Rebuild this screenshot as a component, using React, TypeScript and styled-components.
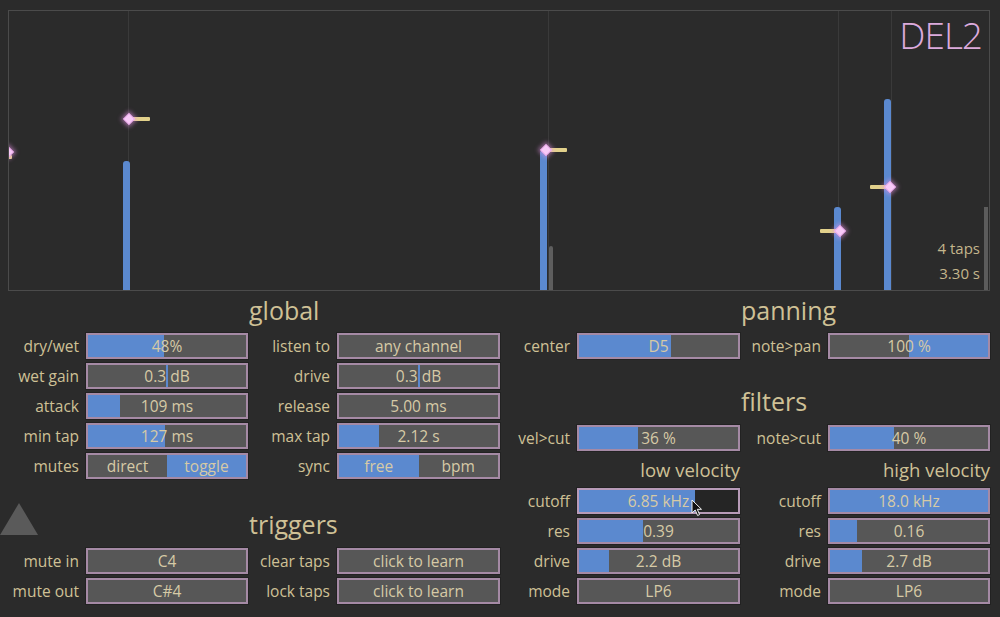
import React from "react";
import styled, { createGlobalStyle } from "styled-components";

const Global = createGlobalStyle`
  html, body { margin: 0; padding: 0; background: #2b2b2b; }
  body { font-family: "Open Sans", "Noto Sans", sans-serif; }
`;

const TAN = "#cfc196";
const BLUE = "#5b89cf";

const Frame = styled.div`
  width: 1000px;
  height: 617px;
  box-sizing: border-box;
  padding-top: 10px;
  background: #2b2b2b;
  display: flex;
  flex-direction: column;
  overflow: hidden;
`;

const Scope = styled.div`
  position: relative;
  margin: 0 10px 0 8px;
  height: 281px;
  box-sizing: border-box;
  border: 1px solid #4b4b4b;
  overflow: hidden;
`;

const GuideLine = styled.div<{ $x: number }>`
  position: absolute;
  top: 0;
  bottom: 0;
  left: ${(p) => p.$x - 9}px;
  width: 1px;
  background: #3a3a3a;
`;

const TapBar = styled.div<{ $x: number; $top: number; $w?: number; $gray?: boolean }>`
  position: absolute;
  left: ${(p) => p.$x - 9}px;
  top: ${(p) => p.$top - 11}px;
  bottom: 0;
  width: ${(p) => p.$w ?? 7}px;
  border-radius: 3px 3px 0 0;
  background: ${(p) => (p.$gray ? "#5e5e5e" : BLUE)};
`;

const Tail = styled.div<{ $x1: number; $x2: number; $y: number }>`
  position: absolute;
  left: ${(p) => p.$x1 - 9}px;
  width: ${(p) => p.$x2 - p.$x1}px;
  top: ${(p) => p.$y - 11 - 2}px;
  height: 4px;
  border-radius: 1px;
  background: #e2d18b;
`;

const Diamond = styled.div<{ $x: number; $y: number }>`
  position: absolute;
  left: ${(p) => p.$x - 9 - 5}px;
  top: ${(p) => p.$y - 11 - 5}px;
  width: 10px;
  height: 10px;
  transform: rotate(45deg) scale(0.85);
  background: #f7c9f7;
  border: 1px solid #e79ee7;
  box-sizing: border-box;
  box-shadow: 0 0 5px 2px rgba(235, 150, 235, 0.55);
`;

const ScrollThumb = styled.div`
  position: absolute;
  right: 1px;
  bottom: 0;
  width: 4px;
  height: 83px;
  background: #5c5c5c;
`;

const Title = styled.div`
  position: absolute;
  top: 4px;
  right: 5px;
  padding-right: 2px;
  font-size: 37px;
  font-weight: 300;
  line-height: 1.1;
  letter-spacing: -1px;
  color: #dcaadc;
  white-space: nowrap;
`;

const Stats = styled.div`
  position: absolute;
  right: 9px;
  bottom: 4px;
  text-align: right;
  font-size: 15px;
  line-height: 25px;
  color: #c4b68c;
`;

const Controls = styled.div`
  display: flex;
  padding-right: 10px;
`;

const LeftGrid = styled.div`
  width: 500px;
  display: grid;
  grid-template-columns: 86px 162px 89px 163px;
  grid-template-rows: 38px repeat(5, 26px) 61px 26px 26px;
  row-gap: 4px;
`;

const RightGrid = styled.div`
  width: 490px;
  display: grid;
  grid-template-columns: 77px 163px 88px 162px;
  grid-template-rows: 38px 26px 58px 26px 29px repeat(4, 26px);
  row-gap: 4px;
`;

const Heading = styled.div<{ $end?: boolean }>`
  grid-column: 3 / 5;
  font-size: 25px;
  line-height: 33px;
  color: ${TAN};
  align-self: ${(p) => (p.$end ? "end" : "center")};
  margin-bottom: ${(p) => (p.$end ? "3px" : "0")};
  padding-left: 1px;
  white-space: nowrap;
`;

const SubHeading = styled.div<{ $col: string }>`
  grid-column: ${(p) => p.$col};
  text-align: right;
  align-self: center;
  font-size: 18.5px;
  line-height: 24px;
  color: ${TAN};
  white-space: nowrap;
`;

const Label = styled.div<{ $col: number }>`
  grid-column: ${(p) => p.$col};
  text-align: right;
  padding-right: 7px;
  font-size: 15.5px;
  line-height: 26px;
  color: ${TAN};
  white-space: nowrap;
`;

const SliderBox = styled.div<{ $col: number; $hover?: boolean }>`
  grid-column: ${(p) => p.$col};
  position: relative;
  box-sizing: border-box;
  height: 26px;
  border: 2px solid ${(p) => (p.$hover ? "#b89bb8" : "#a58aa5")};
  box-shadow: 0 0 0 1px #222;
  background: ${(p) => (p.$hover ? "#252525" : "#575757")};
  display: flex;
`;

const Fill = styled.div<{ $from: number; $to: number }>`
  position: absolute;
  top: 0;
  bottom: 0;
  left: ${(p) => p.$from}%;
  width: ${(p) => p.$to - p.$from}%;
  background: ${BLUE};
`;

const CenterTick = styled.div`
  position: absolute;
  top: 0;
  bottom: 0;
  left: calc(50% - 1px);
  width: 2px;
  background: ${BLUE};
`;

const ValueText = styled.span`
  position: relative;
  flex: 1;
  text-align: center;
  font-size: 15.5px;
  line-height: 22px;
  color: #d6caa6;
  white-space: nowrap;
`;

const Segment = styled.div<{ $on: boolean }>`
  flex: 1;
  text-align: center;
  font-size: 15.5px;
  line-height: 22px;
  color: #d6caa6;
  background: ${(p) => (p.$on ? BLUE : "transparent")};
`;

const TriangleIcon = styled.svg`
  grid-column: 1;
  align-self: end;
  margin-bottom: 9px;
  display: block;
`;

const Cursor = styled.svg`
  position: absolute;
  left: 112px;
  top: 9px;
  display: block;
`;

type Mode =
  | { kind: "fill"; pct: number }
  | { kind: "range"; from: number; to: number }
  | { kind: "tick" }
  | { kind: "none" };

function Slider({
  col,
  text,
  mode,
  hover,
  children,
}: {
  col: number;
  text: string;
  mode: Mode;
  hover?: boolean;
  children?: React.ReactNode;
}) {
  return (
    <SliderBox $col={col} $hover={hover}>
      {mode.kind === "fill" && <Fill $from={0} $to={mode.pct} />}
      {mode.kind === "range" && <Fill $from={mode.from} $to={mode.to} />}
      {mode.kind === "tick" && <CenterTick />}
      <ValueText>{text}</ValueText>
      {children}
    </SliderBox>
  );
}

function Toggle({ col, a, b, on }: { col: number; a: string; b: string; on: 0 | 1 }) {
  return (
    <SliderBox $col={col}>
      <Segment $on={on === 0}>{a}</Segment>
      <Segment $on={on === 1}>{b}</Segment>
    </SliderBox>
  );
}

const taps = [
  { line: 128, bar: 123, top: 161, dx: 129, dy: 119, t1: 129, t2: 150 },
  { line: 548, bar: 540, top: 150, dx: 546, dy: 150, t1: 546, t2: 567 },
  { line: 838, bar: 834, top: 207, dx: 840, dy: 231, t1: 820, t2: 840 },
  { line: 891, bar: 884, top: 99, dx: 890, dy: 187, t1: 870, t2: 890 },
];

export default function App() {
  return (
    <>
      <Global />
      <Frame>
        <Scope>
          {taps.map((t, i) => (
            <GuideLine key={"g" + i} $x={t.line} />
          ))}
          <TapBar $x={549} $top={246} $w={4} $gray />
          {taps.map((t, i) => (
            <React.Fragment key={i}>
              <TapBar $x={t.bar} $top={t.top} />
              <Tail $x1={t.t1} $x2={t.t2} $y={t.dy} />
              <Diamond $x={t.dx} $y={t.dy} />
            </React.Fragment>
          ))}
          <Tail $x1={4} $x2={12} $y={157} />
          <Diamond $x={8} $y={152} />
          <ScrollThumb />
          <Title>DEL2</Title>
          <Stats>
            <div>4 taps</div>
            <div>3.30 s</div>
          </Stats>
        </Scope>
        <Controls>
          <LeftGrid>
            <Heading>global</Heading>

            <Label $col={1}>dry/wet</Label>
            <Slider col={2} text="48%" mode={{ kind: "fill", pct: 48 }} />
            <Label $col={3}>listen to</Label>
            <Slider col={4} text="any channel" mode={{ kind: "none" }} />

            <Label $col={1}>wet gain</Label>
            <Slider col={2} text="0.3 dB" mode={{ kind: "tick" }} />
            <Label $col={3}>drive</Label>
            <Slider col={4} text="0.3 dB" mode={{ kind: "tick" }} />

            <Label $col={1}>attack</Label>
            <Slider col={2} text="109 ms" mode={{ kind: "fill", pct: 20 }} />
            <Label $col={3}>release</Label>
            <Slider col={4} text="5.00 ms" mode={{ kind: "none" }} />

            <Label $col={1}>min tap</Label>
            <Slider col={2} text="127 ms" mode={{ kind: "fill", pct: 48.5 }} />
            <Label $col={3}>max tap</Label>
            <Slider col={4} text="2.12 s" mode={{ kind: "fill", pct: 25 }} />

            <Label $col={1}>mutes</Label>
            <Toggle col={2} a="direct" b="toggle" on={1} />
            <Label $col={3}>sync</Label>
            <Toggle col={4} a="free" b="bpm" on={0} />

            <TriangleIcon width="38" height="32" viewBox="0 0 38 32">
              <polygon points="19,0 38,32 0,32" fill="#5a5a5a" />
            </TriangleIcon>
            <Heading $end>triggers</Heading>

            <Label $col={1}>mute in</Label>
            <Slider col={2} text="C4" mode={{ kind: "none" }} />
            <Label $col={3}>clear taps</Label>
            <Slider col={4} text="click to learn" mode={{ kind: "none" }} />

            <Label $col={1}>mute out</Label>
            <Slider col={2} text="C#4" mode={{ kind: "none" }} />
            <Label $col={3}>lock taps</Label>
            <Slider col={4} text="click to learn" mode={{ kind: "none" }} />
          </LeftGrid>

          <RightGrid>
            <Heading>panning</Heading>

            <Label $col={1}>center</Label>
            <Slider col={2} text="D5" mode={{ kind: "fill", pct: 58 }} />
            <Label $col={3}>note&gt;pan</Label>
            <Slider col={4} text="100 %" mode={{ kind: "range", from: 50, to: 100 }} />

            <Heading $end>filters</Heading>

            <Label $col={1}>vel&gt;cut</Label>
            <Slider col={2} text="36 %" mode={{ kind: "fill", pct: 37 }} />
            <Label $col={3}>note&gt;cut</Label>
            <Slider col={4} text="40 %" mode={{ kind: "fill", pct: 40.5 }} />

            <SubHeading $col="1 / 3">low velocity</SubHeading>
            <SubHeading $col="3 / 5">high velocity</SubHeading>

            <Label $col={1}>cutoff</Label>
            <Slider col={2} text="6.85 kHz" mode={{ kind: "fill", pct: 73 }} hover>
              <Cursor width="12" height="18" viewBox="0 0 12 18">
                <path
                  d="M1 1 L1 14 L4.2 11 L6.6 16.5 L8.6 15.6 L6.3 10.3 L10.5 10.3 Z"
                  fill="#111"
                  stroke="#f2f2f2"
                  strokeWidth="1"
                  strokeLinejoin="round"
                />
              </Cursor>
            </Slider>
            <Label $col={3}>cutoff</Label>
            <Slider col={4} text="18.0 kHz" mode={{ kind: "fill", pct: 100 }} />

            <Label $col={1}>res</Label>
            <Slider col={2} text="0.39" mode={{ kind: "fill", pct: 40 }} />
            <Label $col={3}>res</Label>
            <Slider col={4} text="0.16" mode={{ kind: "fill", pct: 17 }} />

            <Label $col={1}>drive</Label>
            <Slider col={2} text="2.2 dB" mode={{ kind: "fill", pct: 19 }} />
            <Label $col={3}>drive</Label>
            <Slider col={4} text="2.7 dB" mode={{ kind: "fill", pct: 20.5 }} />

            <Label $col={1}>mode</Label>
            <Slider col={2} text="LP6" mode={{ kind: "none" }} />
            <Label $col={3}>mode</Label>
            <Slider col={4} text="LP6" mode={{ kind: "none" }} />
          </RightGrid>
        </Controls>
      </Frame>
    </>
  );
}
